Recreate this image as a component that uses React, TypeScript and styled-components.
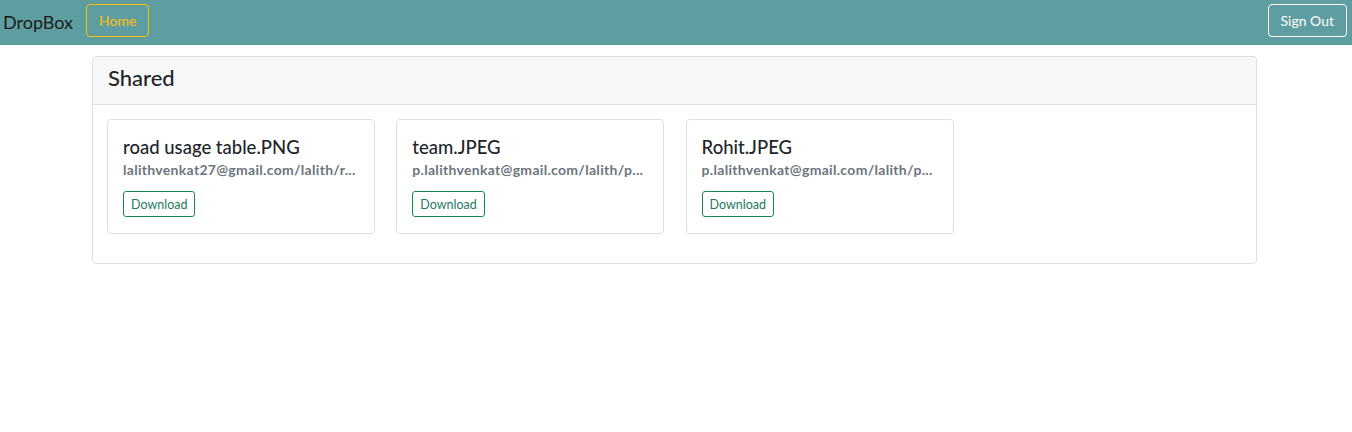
import React from "react";
import styled, { createGlobalStyle } from "styled-components";

const Global = createGlobalStyle`
  html, body { margin: 0; padding: 0; background: #fff; }
  body { font-family: Lato, "Open Sans", "Liberation Sans", sans-serif; color: #212529; }
  * { box-sizing: border-box; }
`;

const NavBar = styled.nav`
  height: 45px;
  background: #5f9ea0;
  display: flex;
  align-items: center;
  padding: 0 5px 0 3px;
`;

const Brand = styled.span`
  font-size: 18px;
  color: #1a1a1a;
  margin-right: 13px;
  margin-top: -2px;
`;

const NavButton = styled.button<{ $tone: string }>`
  font-family: inherit;
  background: transparent;
  border: 1px solid ${(p) => p.$tone};
  color: ${(p) => p.$tone};
  border-radius: 4px;
  font-size: 14px;
  height: 33px;
  padding: 0 12px;
  margin-top: -4px;
  cursor: pointer;
`;

const Spacer = styled.div`
  flex: 1;
`;

const Panel = styled.section`
  margin: 11px 95px 0 92px;
  border: 1px solid #dfdfdf;
  border-radius: 4px;
  overflow: hidden;
`;

const PanelHeader = styled.header`
  height: 48px;
  background: #f7f7f7;
  border-bottom: 1px solid #dfdfdf;
  display: flex;
  align-items: flex-start;
  padding: 6px 15px 0;
`;

const PanelTitle = styled.h3`
  margin: 0;
  font-size: 22px;
  line-height: 30px;
  font-weight: 500;
  color: #212529;
`;

const PanelBody = styled.div`
  padding: 14px 14px 29px;
  display: grid;
  grid-template-columns: repeat(4, 268px);
  column-gap: 21.3px;
`;

const FileCard = styled.article`
  border: 1px solid #dfdfdf;
  border-radius: 4px;
  padding: 16px 15px 15px;
  height: 115px;
  min-width: 0;
`;

const FileName = styled.h5`
  margin: 0;
  font-size: 18.5px;
  font-weight: 500;
  line-height: 22px;
  color: #212529;
`;

const FilePath = styled.div`
  margin-top: 3px;
  font-size: 14px;
  letter-spacing: 0.3px;
  font-weight: 700;
  color: #6c757d;
  white-space: nowrap;
`;

const DownloadButton = styled.button`
  margin-top: 13px;
  font-family: inherit;
  background: #fff;
  border: 1px solid #198754;
  color: #1d7a5f;
  border-radius: 3px;
  font-size: 12.5px;
  height: 26px;
  padding: 0 7px;
  cursor: pointer;
`;

const files = [
  { name: "road usage table.PNG", path: "lalithvenkat27@gmail.com/lalith/r..." },
  { name: "team.JPEG", path: "p.lalithvenkat@gmail.com/lalith/p..." },
  { name: "Rohit.JPEG", path: "p.lalithvenkat@gmail.com/lalith/p..." },
];

export default function App() {
  return (
    <>
      <Global />
      <NavBar>
        <Brand>DropBox</Brand>
        <NavButton $tone="#ffc107">Home</NavButton>
        <Spacer />
        <NavButton $tone="#ffffff">Sign Out</NavButton>
      </NavBar>
      <Panel>
        <PanelHeader>
          <PanelTitle>Shared</PanelTitle>
        </PanelHeader>
        <PanelBody>
          {files.map((f) => (
            <FileCard key={f.name}>
              <FileName>{f.name}</FileName>
              <FilePath>{f.path}</FilePath>
              <DownloadButton>Download</DownloadButton>
            </FileCard>
          ))}
        </PanelBody>
      </Panel>
    </>
  );
}
